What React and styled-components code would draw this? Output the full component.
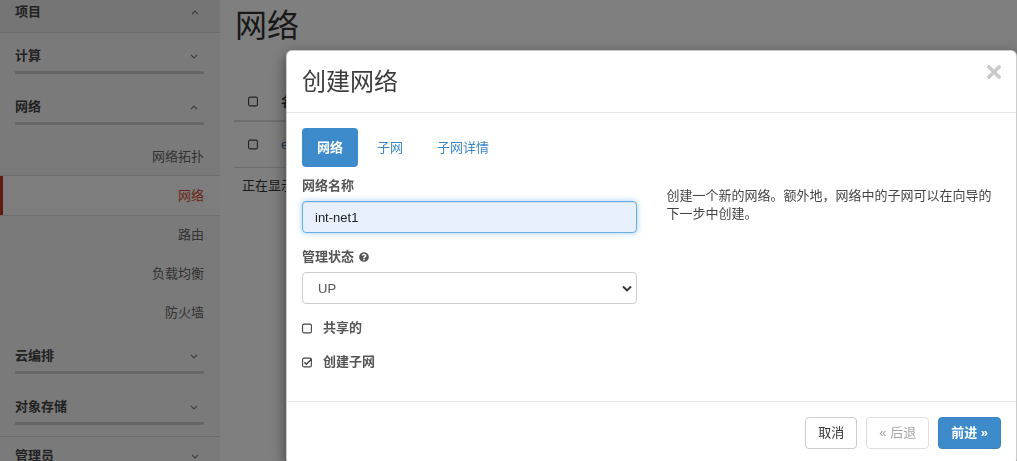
import { createGlobalStyle, styled } from "styled-components";
import { FaQuestionCircle } from "react-icons/fa";

const GlobalStyle = createGlobalStyle`
  html, body {
    margin: 0;
    height: 100%;
    overflow: hidden;
  }
  body {
    font-family: "Liberation Sans", "Noto Sans CJK SC", sans-serif;
    font-size: 13px;
    color: #333;
    background: #fff;
  }
  * { box-sizing: border-box; }
`;

const Page = styled.div`
  display: flex;
  height: 100vh;
`;

/* ---------- sidebar ---------- */
const Sidebar = styled.nav`
  width: 220px;
  flex-shrink: 0;
  background: #f5f5f5;
`;
const DashHeader = styled.div`
  display: flex;
  justify-content: space-between;
  align-items: center;
  padding: ${({ $top }) => ($top ? "2px 21px 10px 15px" : "9px 21px 6px 15px")};
  line-height: 20px;
  font-weight: 700;
  color: #444;
  background: ${({ $top }) => ($top ? "#ebebeb" : "#f5f5f5")};
  border-bottom: ${({ $top }) => ($top ? "1px solid #d6d6d6" : "none")};
  border-top: ${({ $top }) => ($top ? "none" : "1px solid #d6d6d6")};
`;
const DashBody = styled.div`
  padding-bottom: 11px;
`;
const GroupHeader = styled.div`
  display: flex;
  justify-content: space-between;
  align-items: center;
  margin: ${({ $mt }) => $mt}px 16px 0 15px;
  padding: 0 6px 5px 0;
  line-height: 20px;
  font-weight: 700;
  color: #444;
  border-bottom: 3px solid #cdcdcd;
`;
const NavList = styled.ul`
  list-style: none;
  margin: 12px 0 0;
  padding: 0;
`;
const NavItem = styled.li`
  height: 39px;
  line-height: 39px;
  padding-right: 16px;
  text-align: right;
  color: ${({ $active }) => ($active ? "#d64a38" : "#666")};
  background: ${({ $active }) => ($active ? "#fafafa" : "transparent")};
  border-left: 3px solid ${({ $active }) => ($active ? "#c9371f" : "transparent")};
  box-shadow: ${({ $active }) =>
    $active ? "0 -1px 0 #dcdcdc, 0 1px 0 #dcdcdc" : "none"};
`;

function Chevron({ up }) {
  return (
    <svg width="8" height="5" viewBox="0 0 8 5" style={{ display: "block" }}>
      <polyline
        points={up ? "1,4.2 4,1 7,4.2" : "1,0.8 4,4 7,0.8"}
        fill="none"
        stroke="#777"
        strokeWidth="1.1"
      />
    </svg>
  );
}

/* ---------- main ---------- */
const Main = styled.main`
  flex: 1;
  padding: 0 15px 0 14px;
  background: #fff;
`;
const PageTitle = styled.h1`
  margin: 6px 0 0 1px;
  font-size: 32px;
  line-height: 40px;
  font-weight: 400;
  color: #333;
`;
const Table = styled.table`
  width: 100%;
  margin-top: 37px;
  border-collapse: collapse;
  table-layout: fixed;
`;
const Th = styled.th`
  padding: 9px 8px;
  line-height: 19px;
  text-align: left;
  font-weight: 700;
  color: #333;
  border-bottom: 2px solid #ddd;
  width: ${({ $w }) => ($w ? `${$w}px` : "auto")};
`;
const Td = styled.td`
  padding: 13px 8px;
  line-height: 19px;
  color: #333;
  border-bottom: 1px solid #ddd;
`;
const RowLink = styled.a`
  color: #2a6ead;
  text-decoration: none;
`;
const TableFoot = styled.div`
  margin-top: 9px;
  padding-left: 8px;
  line-height: 18px;
  color: #333;
`;

function Box({ checked }) {
  return (
    <svg width="11" height="11" viewBox="0 0 11 11" style={{ display: "block" }}>
      <rect x="0.6" y="1.1" width="8.8" height="8.8" rx="1.5" fill="none" stroke="#444" strokeWidth="1.1" />
      {checked && (
        <polyline points="2.4,5.3 4.4,7.3 9.6,2" fill="none" stroke="#444" strokeWidth="1.5" />
      )}
    </svg>
  );
}

const CellBox = styled.div`
  display: flex;
  justify-content: center;
`;

/* ---------- modal ---------- */
const Backdrop = styled.div`
  position: fixed;
  inset: 0;
  background: rgba(0, 0, 0, 0.5);
`;
const Dialog = styled.div`
  width: 731px;
  margin: 50px 0 0 286px;
  background: #fff;
  border: 1px solid rgba(0, 0, 0, 0.2);
  border-radius: 6px;
  box-shadow: 0 5px 15px rgba(0, 0, 0, 0.5);
`;
const ModalHeader = styled.div`
  display: flex;
  justify-content: space-between;
  padding: 15px;
  border-bottom: 1px solid #e5e5e5;
`;
const ModalTitle = styled.h3`
  margin: 0;
  font-size: 24px;
  line-height: 31px;
  font-weight: 400;
  color: #3c3c3c;
`;
const CloseButton = styled.button`
  align-self: flex-start;
  margin-top: -1px;
  padding: 0;
  border: 0;
  background: none;
  cursor: pointer;
  line-height: 0;
`;
const ModalBody = styled.div`
  padding: 15px;
`;
const Tabs = styled.ul`
  display: flex;
  gap: 4px;
  list-style: none;
  margin: 0;
  padding: 0;
`;
const Tab = styled.li`
  padding: 10px 15px;
  line-height: 19px;
  border-radius: 4px;
  font-weight: ${({ $active }) => ($active ? 700 : 400)};
  color: ${({ $active }) => ($active ? "#fff" : "#3a87c8")};
  background: ${({ $active }) => ($active ? "#3e8bcb" : "transparent")};
`;
const Row = styled.div`
  display: flex;
  margin-top: 10px;
`;
const LeftCol = styled.div`
  width: 50%;
  padding-right: 15px;
  padding-bottom: 15px;
`;
const RightCol = styled.div`
  width: 50%;
  padding-left: 15px;
`;
const Help = styled.p`
  margin: 10px 0 0;
  line-height: 18px;
  color: #444;
`;
const FormGroup = styled.div`
  margin-bottom: 15px;
`;
const Label = styled.label`
  display: flex;
  align-items: center;
  gap: 5px;
  margin-bottom: 6px;
  line-height: 18px;
  font-weight: 700;
  color: #555;
`;
const TextInput = styled.input`
  display: block;
  width: 100%;
  height: 32px;
  padding: 6px 12px;
  font: inherit;
  font-size: 13px;
  color: #222;
  background: #e8f0fe;
  border: 1px solid #66afe9;
  border-radius: 4px;
  outline: 0;
  box-shadow: inset 0 1px 1px rgba(0, 0, 0, 0.075), 0 0 6px rgba(102, 175, 233, 0.6);
  caret-color: #000;
`;
const SelectWrap = styled.div`
  position: relative;
`;
const Select = styled.select`
  display: block;
  width: 100%;
  height: 32px;
  padding: 0 15px;
  font: inherit;
  font-size: 13px;
  color: #555;
  background: #fff;
  border: 1px solid #ccc;
  border-radius: 4px;
  appearance: none;
`;
const SelectArrow = styled.span`
  position: absolute;
  right: 3px;
  top: 13px;
  pointer-events: none;
  line-height: 0;
`;
const CheckRow = styled.label`
  display: flex;
  align-items: center;
  gap: 10px;
  margin-top: ${({ $mt }) => $mt}px;
  line-height: 18px;
  font-weight: 700;
  color: #555;
`;
const ModalFooter = styled.div`
  display: flex;
  justify-content: flex-end;
  gap: 9px;
  padding: 15px;
  border-top: 1px solid #e5e5e5;
`;
const Button = styled.button`
  height: 32px;
  padding: 6px 12px;
  font: inherit;
  font-size: 13px;
  line-height: 18px;
  border-radius: 4px;
  border: 1px solid ${({ $primary, disabled }) =>
    $primary ? "#3a82c2" : disabled ? "#dedede" : "#ccc"};
  color: ${({ $primary, disabled }) => ($primary ? "#fff" : disabled ? "#a6a6a6" : "#333")};
  background: ${({ $primary }) => ($primary ? "#3e8bcb" : "#fff")};
  font-weight: ${({ $primary }) => ($primary ? 700 : 400)};
`;

const subItems = ["网络拓扑", "网络", "路由", "负载均衡", "防火墙"];

export default function App() {
  return (
    <Page>
      <GlobalStyle />
      <Sidebar>
        <DashHeader $top>
          项目 <Chevron up />
        </DashHeader>
        <DashBody>
          <GroupHeader $mt={13}>
            计算 <Chevron />
          </GroupHeader>
          <GroupHeader $mt={23}>
            网络 <Chevron up />
          </GroupHeader>
          <NavList>
            {subItems.map((item, i) => (
              <NavItem key={item + i} $active={i === 1}>
                {item}
              </NavItem>
            ))}
          </NavList>
          <GroupHeader $mt={14}>
            云编排 <Chevron />
          </GroupHeader>
          <GroupHeader $mt={23}>
            对象存储 <Chevron />
          </GroupHeader>
        </DashBody>
        <DashHeader>
          管理员 <Chevron />
        </DashHeader>
      </Sidebar>

      <Main>
        <PageTitle>网络</PageTitle>
        <Table>
          <thead>
            <tr>
              <Th $w={39}>
                <CellBox><Box /></CellBox>
              </Th>
              <Th>名称</Th>
            </tr>
          </thead>
          <tbody>
            <tr>
              <Td>
                <CellBox><Box /></CellBox>
              </Td>
              <Td><RowLink href="#">ext-net</RowLink></Td>
            </tr>
          </tbody>
        </Table>
        <TableFoot>正在显示 1 项</TableFoot>
      </Main>

      <Backdrop>
        <Dialog>
          <ModalHeader>
            <ModalTitle>创建网络</ModalTitle>
            <CloseButton aria-label="关闭">
              <svg width="14" height="14" viewBox="0 0 14 14">
                <path d="M2 2 L12 12 M12 2 L2 12" stroke="#c8c8c8" strokeWidth="3.4" strokeLinecap="square" />
              </svg>
            </CloseButton>
          </ModalHeader>
          <ModalBody>
            <Tabs>
              <Tab $active>网络</Tab>
              <Tab>子网</Tab>
              <Tab>子网详情</Tab>
            </Tabs>
            <Row>
              <LeftCol>
                <FormGroup>
                  <Label>网络名称</Label>
                  <TextInput defaultValue="int-net1" autoFocus />
                </FormGroup>
                <FormGroup>
                  <Label>
                    管理状态 <FaQuestionCircle size={10} color="#555" />
                  </Label>
                  <SelectWrap>
                    <Select defaultValue="UP">
                      <option value="UP">UP</option>
                      <option value="DOWN">DOWN</option>
                    </Select>
                    <SelectArrow>
                      <svg width="14" height="8" viewBox="0 0 14 8">
                        <polyline points="3,1.5 7,5.5 11,1.5" fill="none" stroke="#333" strokeWidth="1.9" />
                      </svg>
                    </SelectArrow>
                  </SelectWrap>
                </FormGroup>
                <CheckRow $mt={0}>
                  <Box /> 共享的
                </CheckRow>
                <CheckRow $mt={16}>
                  <Box checked /> 创建子网
                </CheckRow>
              </LeftCol>
              <RightCol>
                <Help>创建一个新的网络。额外地，网络中的子网可以在向导的下一步中创建。</Help>
              </RightCol>
            </Row>
          </ModalBody>
          <ModalFooter>
            <Button>取消</Button>
            <Button disabled>« 后退</Button>
            <Button $primary>前进 »</Button>
          </ModalFooter>
        </Dialog>
      </Backdrop>
    </Page>
  );
}
